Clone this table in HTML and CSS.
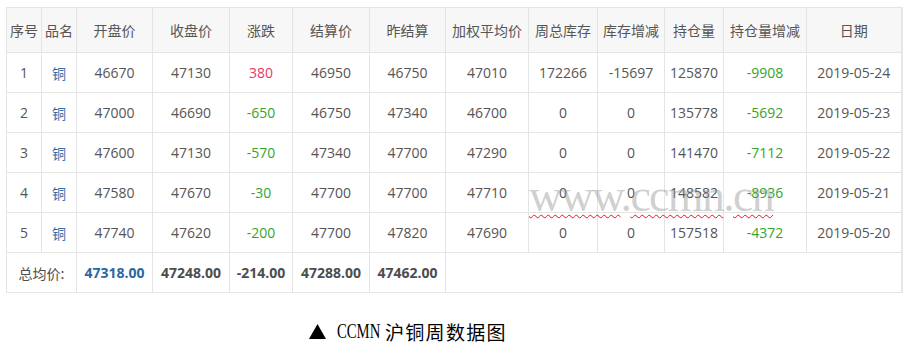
FILE: index.html
```html
<!DOCTYPE html>
<html lang="zh-CN">
<head>
<meta charset="utf-8">
<title>CCMN 沪铜周数据图</title>
<link rel="stylesheet" href="styles.css">
</head>
<body>
<div class="page">
  <div class="table-wrap">
    <table class="data">
      <colgroup>
        <col class="w35"><col class="w35"><col class="w76"><col class="w77"><col class="w63"><col class="w77"><col class="w76"><col class="w83"><col class="w69"><col class="w67"><col class="w59"><col class="w83"><col class="w95">
      </colgroup>
      <thead>
        <tr>
          <th>序号</th><th>品名</th><th>开盘价</th><th>收盘价</th><th>涨跌</th><th>结算价</th><th>昨结算</th><th>加权平均价</th><th>周总库存</th><th>库存增减</th><th>持仓量</th><th>持仓量增减</th><th>日期</th>
        </tr>
      </thead>
      <tbody>
        <tr><td>1</td><td class="name">铜</td><td>46670</td><td>47130</td><td class="up">380</td><td>46950</td><td>46750</td><td>47010</td><td>172266</td><td>-15697</td><td>125870</td><td class="down">-9908</td><td>2019-05-24</td></tr>
        <tr><td>2</td><td class="name">铜</td><td>47000</td><td>46690</td><td class="down">-650</td><td>46750</td><td>47340</td><td>46700</td><td>0</td><td>0</td><td>135778</td><td class="down">-5692</td><td>2019-05-23</td></tr>
        <tr><td>3</td><td class="name">铜</td><td>47600</td><td>47130</td><td class="down">-570</td><td>47340</td><td>47700</td><td>47290</td><td>0</td><td>0</td><td>141470</td><td class="down">-7112</td><td>2019-05-22</td></tr>
        <tr><td>4</td><td class="name">铜</td><td>47580</td><td>47670</td><td class="down">-30</td><td>47700</td><td>47700</td><td>47710</td><td>0</td><td>0</td><td>148582</td><td class="down">-8936</td><td>2019-05-21</td></tr>
        <tr><td>5</td><td class="name">铜</td><td>47740</td><td>47620</td><td class="down">-200</td><td>47700</td><td>47820</td><td>47690</td><td>0</td><td>0</td><td>157518</td><td class="down">-4372</td><td>2019-05-20</td></tr>
        <tr class="total">
          <td colspan="2">总均价:</td><td class="blue">47318.00</td><td>47248.00</td><td>-214.00</td><td>47288.00</td><td>47462.00</td><td colspan="6"></td>
        </tr>
      </tbody>
    </table>
    <div class="watermark"><span class="sq">www</span>.<span class="sq">ccmn</span>.<span class="sq">cn</span></div>
  </div>
  <p class="caption">
    <svg class="tri" width="17" height="15" viewBox="0 0 17 15"><polygon points="8.5,0 17,15 0,15" fill="#000"/></svg>
    <span class="latin">CCMN</span><span class="cjk">沪铜周数据图</span>
  </p>
</div>
</body>
</html>
```
FILE: styles.css
```css
html, body {
  margin: 0;
  padding: 0;
  background: #fff;
}
.page {
  padding: 7px 0 0 6px;
  font-family: "Open Sans", "Noto Sans CJK SC", sans-serif;
}
.table-wrap {
  position: relative;
  width: 895px;
}
.data {
  border-collapse: collapse;
  table-layout: fixed;
  width: 895px;
  font-size: 14px;
  color: #555;
}
.w35 { width: 35px; }
.w59 { width: 59px; }
.w63 { width: 63px; }
.w67 { width: 67px; }
.w69 { width: 69px; }
.w76 { width: 76px; }
.w77 { width: 77px; }
.w83 { width: 83px; }
.w95 { width: 95px; }
.data th, .data td {
  border: 1px solid #e4e4e4;
  text-align: center;
  padding: 0;
  white-space: nowrap;
}
.data th {
  height: 44px;
  background: #f7f7f7;
  font-family: "Noto Sans CJK SC", sans-serif;
  font-weight: normal;
  color: #555;
}
.data td {
  height: 39px;
}
.data tr > *:last-child {
  border-right: 2px solid #e6e6e6;
}
.data td.name {
  color: #2f6ea8;
  font-family: "Noto Sans CJK SC", sans-serif;
}
.data td.up { color: #ef3562; }
.data td.down { color: #34a52c; }
.total td {
  font-weight: bold;
  color: #4d4d4d;
}
.total td:first-child {
  font-family: "Noto Sans CJK SC", sans-serif;
  font-weight: normal;
}
.total td.blue { color: #2a68a2; }
.watermark {
  position: absolute;
  left: 523px;
  top: 164px;
  font-family: "Liberation Serif", serif;
  font-size: 46px;
  letter-spacing: -1.7px;
  line-height: 50px;
  color: rgba(140, 140, 140, 0.42);
  pointer-events: none;
}
.sq {
  text-decoration: underline wavy #e11;
  text-decoration-thickness: 1px;
  text-underline-offset: 3px;
}
.caption {
  margin: 25px 0 0 303px;
  height: 26px;
  display: flex;
  align-items: center;
  color: #000;
}
.tri {
  display: block;
  margin-right: 11px;
}
.latin {
  display: inline-block;
  font-family: "Liberation Serif", serif;
  font-size: 21px;
  transform: scaleX(0.7);
  transform-origin: left center;
  width: 43px;
  margin-right: 5px;
}
.cjk {
  font-family: "Noto Sans CJK SC", sans-serif;
  font-size: 19px;
  letter-spacing: 1.3px;
}
```
